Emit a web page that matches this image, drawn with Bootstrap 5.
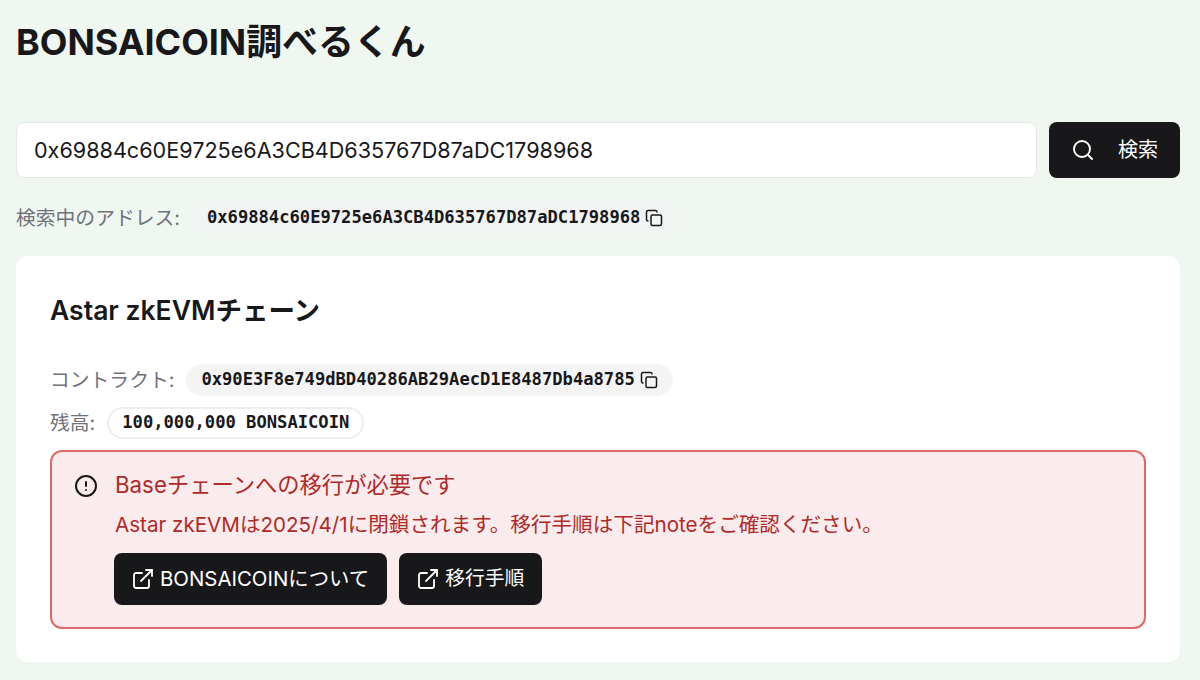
<!DOCTYPE html>
<html lang="ja">
<head>
    <meta charset="UTF-8">
    <title>BONSAICOIN調べるくん</title>
    <link href="https://cdn.jsdelivr.net/npm/bootstrap@5.3.1/dist/css/bootstrap.min.css" rel="stylesheet">
    <style>
        body {
            background-color: #f0f7f1;
            font-family: Inter, "Noto Sans CJK JP", sans-serif;
            color: #18181b;
            padding: 16px 20px 16px 16px;
            overflow: hidden;
        }
        .page-title {
            font-size: 35.9px;
            font-weight: 700;
            line-height: 52px;
            margin-bottom: 54px;
        }
        .addr-input {
            height: 56px;
            font-size: 21.6px;
            padding: 0 17px;
            border: 1px solid #e4e7e6;
            border-radius: 8px;
            color: #18181b;
        }
        .dark-btn {
            background-color: #18181b;
            color: #fff;
            border: 0;
            border-radius: 8px;
            display: inline-flex;
            align-items: center;
        }
        .search-btn {
            width: 131px;
            height: 56px;
            font-size: 20px;
            justify-content: center;
            gap: 23px;
            flex-shrink: 0;
        }
        .link-btn {
            height: 52px;
            padding: 0 18px 0 17px;
            font-size: 20.4px;
            gap: 5px;
        }
        .link-btn-short {
            font-size: 19.8px;
        }
        .field-label {
            color: #71717a;
            font-size: 19.8px;
            padding-top: 2px;
        }
        .chip {
            font-family: "DejaVu Sans Mono", "Liberation Mono", monospace;
            font-weight: 700;
            font-size: 17.15px;
            border-radius: 16px;
            height: 32px;
            padding: 0 15px;
            display: inline-flex;
            align-items: center;
            gap: 5px;
            background-color: #f4f4f5;
        }
        .chip-soft {
            background-color: #f2f4f4;
        }
        .chip-outline {
            background-color: #fff;
            border: 2px solid #eeeef0;
            padding: 0 13px;
        }
        .search-row {
            margin-bottom: 24px;
        }
        .label-row {
            gap: 12px;
        }
        .contract-row {
            margin-bottom: 11px;
        }
        .result-panel {
            background: #fff;
            border-radius: 12px;
            margin-top: 22px;
            padding: 34px;
            height: 406px;
        }
        .panel-title {
            font-size: 26.5px;
            font-weight: 600;
            line-height: 40px;
            margin-bottom: 34px;
        }
        .warn-box {
            background-color: #faebec;
            border: 2px solid #dd6a66;
            border-radius: 12px;
            color: #b02a2a;
            margin-top: 11px;
            padding: 17px 22px;
            height: 179px;
            gap: 17px;
        }
        .warn-icon {
            margin-top: 5px;
        }
        .warn-title {
            font-size: 22.3px;
            line-height: 32px;
        }
        .warn-text {
            font-size: 20.6px;
            line-height: 28px;
            margin: 10px 0 14px;
            white-space: nowrap;
        }
        .link-row {
            gap: 12px;
        }
        .link-row-offset {
            margin-left: -1px;
        }
    </style>
</head>
<body>
    <h1 class="page-title">BONSAICOIN調べるくん</h1>

    <div class="d-flex search-row link-row">
        <input type="text" class="form-control addr-input" value="0x69884c60E9725e6A3CB4D635767D87aDC1798968">
        <button class="dark-btn search-btn">
            <svg width="24" height="24" viewBox="0 0 24 24" fill="none" stroke="currentColor" stroke-width="1.9" stroke-linecap="round"><circle cx="11" cy="11" r="8"/><path d="m21 21-4.3-4.3"/></svg>
            検索
        </button>
    </div>

    <div class="d-flex align-items-center label-row">
        <span class="field-label">検索中のアドレス:</span>
        <span class="chip chip-soft">0x69884c60E9725e6A3CB4D635767D87aDC1798968
            <svg width="18" height="18" viewBox="0 0 24 24" fill="none" stroke="currentColor" stroke-width="2" stroke-linecap="round"><rect x="8" y="8" width="14" height="14" rx="2"/><path d="M4 16c-1.1 0-2-.9-2-2V4c0-1.1.9-2 2-2h10c1.1 0 2 .9 2 2"/></svg>
        </span>
    </div>

    <section class="result-panel">
        <h2 class="panel-title">Astar zkEVMチェーン</h2>

        <div class="d-flex align-items-center label-row contract-row">
            <span class="field-label">コントラクト:</span>
            <span class="chip">0x90E3F8e749dBD40286AB29AecD1E8487Db4a8785
                <svg width="18" height="18" viewBox="0 0 24 24" fill="none" stroke="currentColor" stroke-width="2" stroke-linecap="round"><rect x="8" y="8" width="14" height="14" rx="2"/><path d="M4 16c-1.1 0-2-.9-2-2V4c0-1.1.9-2 2-2h10c1.1 0 2 .9 2 2"/></svg>
            </span>
        </div>
        <div class="d-flex align-items-center label-row">
            <span class="field-label">残高:</span>
            <span class="chip chip-outline">100,000,000 BONSAICOIN</span>
        </div>

        <div class="warn-box d-flex">
            <svg class="flex-shrink-0 warn-icon" width="24" height="24" viewBox="0 0 24 24" fill="none" stroke="#18181b" stroke-width="2" stroke-linecap="round"><circle cx="12" cy="12" r="10"/><path d="M12 8v4"/><path d="M12 16h.01"/></svg>
            <div>
                <div class="warn-title">Baseチェーンへの移行が必要です</div>
                <div class="warn-text">Astar zkEVMは2025/4/1に閉鎖されます。移行手順は下記noteをご確認ください。</div>
                <div class="d-flex link-row link-row-offset">
                    <a class="dark-btn link-btn text-decoration-none" href="#">
                        <svg width="24" height="24" viewBox="0 0 24 24" fill="none" stroke="currentColor" stroke-width="1.8" stroke-linecap="round" stroke-linejoin="round"><path d="M15 3h6v6"/><path d="M10 14 21 3"/><path d="M18 13v6a2 2 0 0 1-2 2H5a2 2 0 0 1-2-2V8a2 2 0 0 1 2-2h6"/></svg>
                        BONSAICOINについて
                    </a>
                    <a class="dark-btn link-btn link-btn-short text-decoration-none" href="#">
                        <svg width="24" height="24" viewBox="0 0 24 24" fill="none" stroke="currentColor" stroke-width="1.8" stroke-linecap="round" stroke-linejoin="round"><path d="M15 3h6v6"/><path d="M10 14 21 3"/><path d="M18 13v6a2 2 0 0 1-2 2H5a2 2 0 0 1-2-2V8a2 2 0 0 1 2-2h6"/></svg>
                        移行手順
                    </a>
                </div>
            </div>
        </div>
    </section>

    <script src="https://cdn.jsdelivr.net/npm/bootstrap@5.3.1/dist/js/bootstrap.bundle.min.js"></script>
</body>
</html>
